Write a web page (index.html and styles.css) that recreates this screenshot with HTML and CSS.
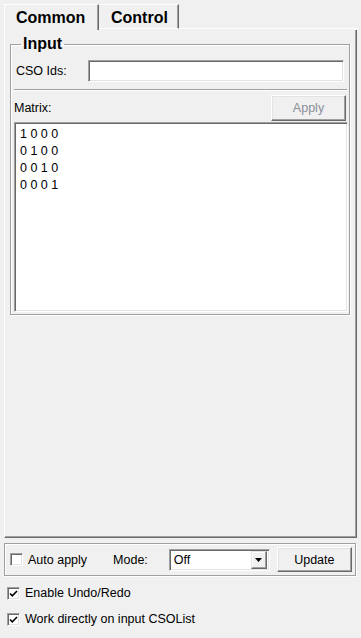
FILE: index.html
```html
<!DOCTYPE html>
<html>
<head>
<meta charset="utf-8">
<link rel="stylesheet" href="styles.css">
</head>
<body>
<div class="tabbar">
  <div class="tab active">Common</div>
  <div class="tab">Control</div>
  <div class="tabfill"></div>
</div>
<div class="pane">
  <fieldset class="group">
    <legend class="legend">Input</legend>
    <div class="row cso">
      <span class="lbl">CSO Ids:</span>
      <div class="edit"></div>
    </div>
    <div class="sep"></div>
    <div class="row matrix">
      <span class="lbl mlbl">Matrix:</span>
      <div class="btn apply">Apply</div>
    </div>
    <div class="textarea">
      <div>1 0 0 0</div>
      <div>0 1 0 0</div>
      <div>0 0 1 0</div>
      <div>0 0 0 1</div>
    </div>
  </fieldset>
</div>
<div class="frame">
  <span class="chk"></span>
  <span class="auto">Auto apply</span>
  <span class="mode">Mode:</span>
  <div class="combo">
    <span class="combotext">Off</span>
    <span class="arrowbtn"><svg width="7" height="4" viewBox="0 0 7 4"><path d="M0 0H7L3.5 4Z" fill="#000"/></svg></span>
  </div>
  <div class="btn update">Update</div>
</div>
<div class="check-row first">
  <span class="chk"><svg width="9" height="9" viewBox="0 0 9 9"><path d="M1 4.5L3.3 6.8L8 2" stroke="#000" stroke-width="1.6" fill="none"/></svg></span>
  <span>Enable Undo/Redo</span>
</div>
<div class="check-row second">
  <span class="chk"><svg width="9" height="9" viewBox="0 0 9 9"><path d="M1 4.5L3.3 6.8L8 2" stroke="#000" stroke-width="1.6" fill="none"/></svg></span>
  <span>Work directly on input CSOList</span>
</div>
</body>
</html>
```
FILE: styles.css
```css
html, body {
  margin: 0;
  padding: 0;
  background: #f0f0f0;
  width: 361px;
  height: 638px;
  overflow: hidden;
  font-family: "Liberation Sans", Arial, sans-serif;
  font-size: 12.5px;
  color: #000;
}

.tabbar {
  display: flex;
  padding: 4px 0 0 4px;
  width: 353px;
  height: 26px;
  align-items: flex-start;
}

.tab {
  box-sizing: border-box;
  height: 25px;
  width: 80px;
  font-weight: bold;
  font-size: 16px;
  border-top: 1px solid #fff;
  border-right: 1px solid #696969;
  border-bottom: 1px solid #fff;
  padding-top: 4px;
  padding-left: 12px;
  box-shadow: inset -1px 0 0 #a0a0a0;
}

.tab.active {
  width: 95px;
  height: 26px;
  border-left: 1px solid #fff;
  border-bottom: none;
  padding-left: 11px;
}

.tabfill {
  flex: 1;
  height: 25px;
  box-sizing: border-box;
  border-bottom: 1px solid #fff;
}

.pane {
  box-sizing: border-box;
  margin-left: 4px;
  width: 353px;
  height: 508px;
  border-left: 1px solid #fff;
  border-right: 1px solid #696969;
  border-bottom: 1px solid #696969;
  box-shadow: inset -1px -1px 0 #a0a0a0;
  padding: 5px 0 0 5px;
}

.group {
  box-sizing: border-box;
  margin: 0;
  width: 340px;
  border: 1px solid #a0a0a0;
  box-shadow: inset 1px 1px 0 #fff, 1px 1px 0 #fff;
  padding: 0 1px 2px 3px;
}

.legend {
  font-weight: bold;
  font-size: 16px;
  line-height: 18px;
  padding: 0 2px;
  margin-left: 7px;
}

.row {
  display: flex;
  align-items: center;
}

.cso {
  margin-top: 7px;
  height: 22px;
}

.lbl {
  margin-left: 2px;
}

.mlbl {
  margin-left: 0;
}

.edit {
  box-sizing: border-box;
  margin-left: auto;
  margin-right: 4px;
  width: 256px;
  height: 22px;
  background: #fff;
  border: 1px solid;
  border-color: #a0a0a0 #fff #fff #a0a0a0;
  box-shadow: inset 1px 1px 0 #696969, inset -1px -1px 0 #e3e3e3;
}

.sep {
  margin-top: 7px;
  height: 1px;
  background: #a0a0a0;
  border-bottom: 1px solid #fff;
  margin-right: 1px;
}

.matrix {
  margin-top: 4px;
  height: 26px;
  justify-content: space-between;
}

.btn {
  box-sizing: border-box;
  display: flex;
  align-items: center;
  justify-content: center;
  border: 1px solid;
  border-color: #fff #696969 #696969 #fff;
  box-shadow: inset -1px -1px 0 #a0a0a0, inset 1px 1px 0 #e3e3e3;
  background: #f0f0f0;
}

.apply {
  width: 75px;
  height: 26px;
  margin-right: 2px;
  color: #8a8f98;
}

.textarea {
  box-sizing: border-box;
  margin-top: 1px;
  width: 334px;
  height: 190px;
  background: #fff;
  border: 1px solid;
  border-color: #a0a0a0 #fff #fff #a0a0a0;
  box-shadow: inset 1px 1px 0 #696969, inset -1px -1px 0 #e3e3e3;
  padding: 3px 0 0 5px;
  line-height: 17px;
}

.frame {
  box-sizing: border-box;
  display: flex;
  align-items: center;
  margin: 5px 0 0 4px;
  width: 352px;
  height: 33px;
  border: 1px solid #a0a0a0;
  box-shadow: inset 1px 1px 0 #fff, 1px 1px 0 #fff;
  padding-left: 5px;
}

.chk {
  box-sizing: border-box;
  display: inline-flex;
  align-items: center;
  justify-content: center;
  width: 13px;
  height: 13px;
  background: #fff;
  border: 1px solid;
  border-color: #a0a0a0 #fff #fff #a0a0a0;
  box-shadow: inset 1px 1px 0 #696969, inset -1px -1px 0 #e3e3e3;
  flex: none;
}

.auto {
  margin-left: 5px;
}

.mode {
  margin-left: 26px;
}

.combo {
  box-sizing: border-box;
  display: flex;
  align-items: center;
  margin-left: 21px;
  width: 101px;
  height: 22px;
  background: #fff;
  border: 1px solid;
  border-color: #a0a0a0 #fff #fff #a0a0a0;
  box-shadow: inset 1px 1px 0 #696969, inset -1px -1px 0 #e3e3e3;
  padding: 2px 2px 2px 4px;
}

.combotext {
  flex: 1;
}

.arrowbtn {
  box-sizing: border-box;
  display: flex;
  align-items: center;
  justify-content: center;
  width: 16px;
  height: 18px;
  background: #f0f0f0;
  border: 1px solid;
  border-color: #e3e3e3 #696969 #696969 #e3e3e3;
  box-shadow: inset -1px -1px 0 #a0a0a0, inset 1px 1px 0 #fff;
}

.update {
  margin-left: 7px;
  width: 75px;
  height: 25px;
}

.check-row {
  display: flex;
  align-items: center;
  gap: 5px;
  margin-left: 7px;
  height: 14px;
}

.check-row.first {
  margin-top: 10px;
}

.check-row.second {
  margin-top: 12px;
}
```
